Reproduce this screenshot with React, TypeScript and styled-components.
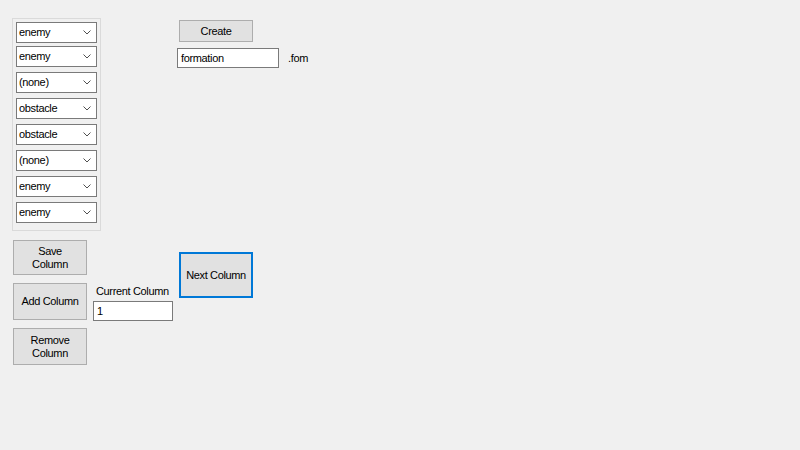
import React from "react";
import styled, { createGlobalStyle } from "styled-components";

const Global = createGlobalStyle`
  html, body { margin: 0; padding: 0; background: #f0f0f0; }
  body { font-family: "Liberation Sans", Arial, sans-serif; font-size: 11px; letter-spacing: -0.35px; color: #000; }
  * { box-sizing: border-box; }
`;

const Page = styled.div`
  width: 800px;
  height: 450px;
  background: #f0f0f0;
  display: flex;
  flex-direction: column;
`;

const TopRow = styled.div`
  display: flex;
  align-items: flex-start;
  padding: 18px 0 0 12px;
`;

const Panel = styled.div`
  width: 89px;
  height: 213px;
  border: 1px solid #dadada;
  padding: 2px 3px 0 3px;
  display: flex;
  flex-direction: column;
`;

const Combo = styled.div<{ $gap: number }>`
  width: 81px;
  height: 21px;
  margin-top: ${(p) => p.$gap}px;
  background: #fff;
  border: 1px solid #7a7a7a;
  display: flex;
  align-items: center;
  justify-content: space-between;
  padding: 0 5px 0 2px;
  line-height: 19px;
`;

const Chevron = () => (
  <svg width="8" height="5" viewBox="0 0 8 5">
    <path d="M0.5 0.5 L4 4 L7.5 0.5" fill="none" stroke="#505050" strokeWidth="1" />
  </svg>
);

const TopRight = styled.div`
  margin: 2px 0 0 76px;
  display: flex;
  flex-direction: column;
  align-items: flex-start;
`;

const Button = styled.div<{ $w: number; $h: number; $focus?: boolean }>`
  width: ${(p) => p.$w}px;
  height: ${(p) => p.$h}px;
  background: #e1e1e1;
  border: ${(p) => (p.$focus ? "2px solid #0078d7" : "1px solid #adadad")};
  display: flex;
  align-items: center;
  justify-content: center;
  text-align: center;
  line-height: 13px;
`;

const CreateButton = styled(Button)`
  margin-left: 2px;
`;

const FileRow = styled.div`
  display: flex;
  align-items: center;
  margin-top: 6px;
  gap: 9px;
`;

const TextBox = styled.div<{ $w: number }>`
  width: ${(p) => p.$w}px;
  height: 20px;
  background: #fff;
  border: 1px solid #7a7a7a;
  padding: 0 3px;
  line-height: 18px;
`;

const Ext = styled.span`
  line-height: 13px;
`;

const BottomRow = styled.div`
  display: flex;
  align-items: flex-start;
  padding: 9px 0 0 13px;
`;

const ButtonColumn = styled.div`
  display: flex;
  flex-direction: column;
  gap: 8px;
`;

const MidColumn = styled.div`
  margin: 45px 0 0 6px;
  display: flex;
  flex-direction: column;
`;

const Label = styled.div`
  line-height: 13px;
  padding-left: 3px;
  margin-bottom: 3px;
`;

const NextWrap = styled.div`
  margin: 12px 0 0 6px;
`;

const items = ["enemy", "enemy", "(none)", "obstacle", "obstacle", "(none)", "enemy", "enemy"];

export default function App() {
  return (
    <Page>
      <Global />
      <TopRow>
        <Panel>
          {items.map((t, i) => (
            <Combo key={i} $gap={i === 0 ? 1 : i === 1 ? 3 : 5}>
              <span>{t}</span>
              <Chevron />
            </Combo>
          ))}
        </Panel>
        <TopRight>
          <CreateButton $w={74} $h={22}>Create</CreateButton>
          <FileRow>
            <TextBox $w={102}>formation</TextBox>
            <Ext>.fom</Ext>
          </FileRow>
        </TopRight>
      </TopRow>
      <BottomRow>
        <ButtonColumn>
          <Button $w={74} $h={35}>Save<br />Column</Button>
          <Button $w={74} $h={37}>Add Column</Button>
          <Button $w={74} $h={37}>Remove<br />Column</Button>
        </ButtonColumn>
        <MidColumn>
          <Label>Current Column</Label>
          <TextBox $w={80}>1</TextBox>
        </MidColumn>
        <NextWrap>
          <Button $w={74} $h={46} $focus>Next Column</Button>
        </NextWrap>
      </BottomRow>
    </Page>
  );
}
